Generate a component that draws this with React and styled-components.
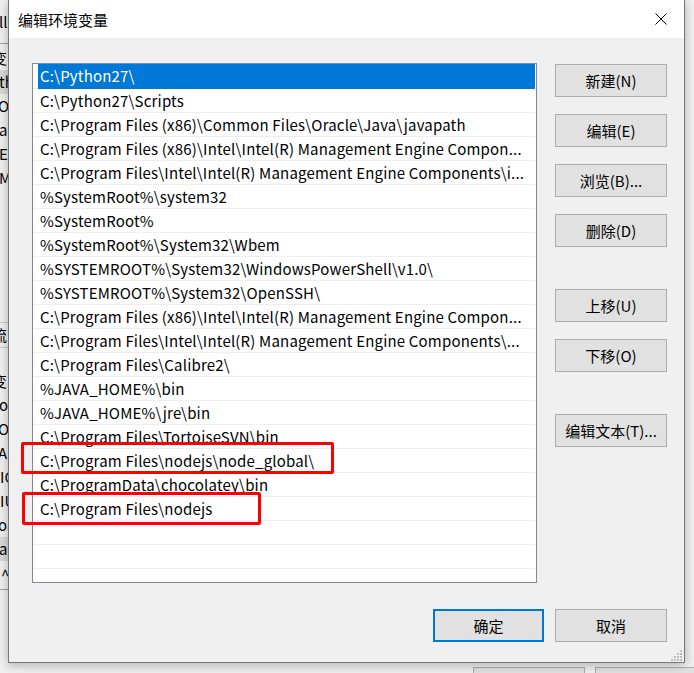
import styled, { createGlobalStyle } from "styled-components"

const GlobalStyle = createGlobalStyle`
  html, body {
    margin: 0;
    padding: 0;
    background: #f0f0f0;
  }
  body {
    font-family: "Noto Sans CJK SC", "Noto Sans", sans-serif;
  }
`;

const Desktop = styled.div`
  position: relative;
  width: 694px;
  height: 673px;
  overflow: hidden;
  background: #f0f0f0;
  display: grid;
  grid-template-columns: 8px 1fr 9px;
`;

// parent "environment variables" window peeking out behind the dialog
const LeftStrip = styled.div`
  display: flex;
  flex-direction: column;
  overflow: hidden;
  font-size: 15px;
  color: #000;
`;

const BackRow = styled.div`
  flex: none;
  height: ${(p) => p.$h}px;
  line-height: ${(p) => p.$h}px;
  background: ${(p) => (p.$sel ? "#d9d9d9" : "transparent")};
  text-indent: ${(p) => p.$indent || 0}px;
  white-space: nowrap;
`;

const BackLine = styled.div`
  flex: none;
  height: ${(p) => p.$h || 1}px;
  background: ${(p) => p.$color};
`;

const Middle = styled.div`
  display: flex;
  flex-direction: column;
  justify-content: flex-end;
`;

const BackButtons = styled.div`
  display: flex;
  gap: 10px;
  height: 6px;
  padding-left: 465px;
  overflow: hidden;
`;

const BackButton = styled.div`
  flex: none;
  width: 110px;
  height: 20px;
  border: 1px solid #adadad;
  background: #e1e1e1;
`;

const RightStrip = styled.div`
  display: flex;
  flex-direction: column;
  overflow: hidden;
`;

const Dialog = styled.div`
  position: absolute;
  left: 8px;
  top: -1px;
  width: 677px;
  height: 664px;
  box-sizing: border-box;
  border: 1px solid #767676;
  background: #f0f0f0;
  box-shadow: 0 2px 10px rgba(0, 0, 0, 0.28);
  display: flex;
  flex-direction: column;
`;

const TitleBar = styled.div`
  height: 38px;
  flex: none;
  background: #fff;
  display: flex;
  align-items: center;
  padding-left: 9px;
`;

const Title = styled.div`
  flex: 1;
  font-size: 15px;
  color: #000;
`;

const CloseButton = styled.div`
  width: 45px;
  height: 38px;
  display: flex;
  align-items: center;
  justify-content: center;
  margin-right: 1px;
`;

const Body = styled.div`
  flex: 1;
  display: flex;
  flex-direction: column;
  padding: 25px 17px 20px 23px;
`;

const Main = styled.div`
  display: grid;
  grid-template-columns: 505px 112px;
  gap: 18px;
`;

const PathList = styled.div`
  height: 520px;
  box-sizing: border-box;
  border: 1px solid #828790;
  background: #fff;
  padding: 1px 1px 0 0;
  overflow: hidden;
`;

const Row = styled.div`
  height: 24px;
  box-sizing: border-box;
  border-bottom: 1px solid #efefef;
  padding-left: 5px;
  display: flex;
`;

const Cell = styled.div`
  flex: 1;
  min-width: 0;
  padding-left: 2px;
  margin: ${(p) => (p.$selected ? "-1px 0 -1px 0" : "0")};
  background: ${(p) => (p.$selected ? "#0078d7" : "transparent")};
  color: ${(p) => (p.$selected ? "#fff" : "#000")};
  font-size: 15px;
  letter-spacing: 0.18px;
  line-height: 23px;
  white-space: nowrap;
  overflow: hidden;
  text-overflow: ellipsis;
`;

const SideButtons = styled.div`
  display: flex;
  flex-direction: column;
  gap: 17px;
  padding-top: 1px;
`;

const Button = styled.button`
  width: ${(p) => p.$w || 112}px;
  height: 33px;
  margin-top: ${(p) => p.$space || 0}px;
  box-sizing: border-box;
  border: ${(p) => (p.$primary ? "2px solid #0078d7" : "1px solid #adadad")};
  background: #e1e1e1;
  color: #000;
  font-family: "Noto Sans CJK SC", "Noto Sans", sans-serif;
  font-size: 15px;
  padding: 0;
  border-radius: 0;
  cursor: default;
`;

const Footer = styled.div`
  display: flex;
  justify-content: flex-end;
  gap: 11px;
  margin-top: 26px;
`;

const Grip = styled.svg`
  position: absolute;
  right: 1px;
  bottom: 1px;
`;

const Mark = styled.div`
  position: absolute;
  left: ${(p) => p.$x}px;
  top: ${(p) => p.$y}px;
  width: ${(p) => p.$w}px;
  height: ${(p) => p.$h}px;
  box-sizing: border-box;
  border: 3px solid #ff0000;
  border-radius: 2px;
`;

const paths = [
  "C:\\Python27\\",
  "C:\\Python27\\Scripts",
  "C:\\Program Files (x86)\\Common Files\\Oracle\\Java\\javapath",
  "C:\\Program Files (x86)\\Intel\\Intel(R) Management Engine Compon...",
  "C:\\Program Files\\Intel\\Intel(R) Management Engine Components\\i...",
  "%SystemRoot%\\system32",
  "%SystemRoot%",
  "%SystemRoot%\\System32\\Wbem",
  "%SYSTEMROOT%\\System32\\WindowsPowerShell\\v1.0\\",
  "%SYSTEMROOT%\\System32\\OpenSSH\\",
  "C:\\Program Files (x86)\\Intel\\Intel(R) Management Engine Compon...",
  "C:\\Program Files\\Intel\\Intel(R) Management Engine Components\\...",
  "C:\\Program Files\\Calibre2\\",
  "%JAVA_HOME%\\bin",
  "%JAVA_HOME%\\jre\\bin",
  "C:\\Program Files\\TortoiseSVN\\bin",
  "C:\\Program Files\\nodejs\\node_global\\",
  "C:\\ProgramData\\chocolatey\\bin",
  "C:\\Program Files\\nodejs",
  "",
  "",
  "",
];

const leftRows = [
  { h: 43, t: "ll", indent: -1 },
  { line: "#a0a0a0" },
  { h: 2 },
  { h: 24, t: "变", indent: -8 },
  { h: 24, t: "th", sel: true, indent: -1 },
  { h: 24, t: "Or", indent: -2 },
  { h: 24, t: "a", indent: -1 },
  { h: 24, t: "E", indent: -1 },
  { h: 24, t: "M", indent: -1 },
  { h: 132 },
  { line: "#c8c8c8" },
  { h: 24, t: "流", indent: -8 },
  { line: "#c8c8c8" },
  { h: 21 },
  { h: 24, t: "变", indent: -8 },
  { h: 24, t: "o", indent: -1 },
  { h: 24, t: "Or", indent: -2 },
  { h: 24, t: "A", indent: -2 },
  { h: 24, t: "IC", indent: 0 },
  { h: 24, t: "IU", indent: 0 },
  { h: 24, t: "oS", indent: -2 },
  { h: 24, t: "a", sel: true, indent: -1 },
  { h: 28, t: "^", indent: 1 },
  { line: "#a0a0a0" },
];

const rightStripes = [
  [43, "#f0f0f0"],
  [1, "#a0a0a0"],
  [207, "#e4e4e4"],
  [1, "#a0a0a0"],
  [18, "#e0e0e0"],
  [32, "#cdcdcd"],
  [20, "#e0e0e0"],
  [1, "#c8c8c8"],
  [21, "#e0e0e0"],
  [1, "#c8c8c8"],
  [21, "#e0e0e0"],
  [2, "#7a7a7a"],
  [45, "#ececec"],
  [57, "#c2c2c2"],
  [203, "#ececec"],
];

export default function App() {
  return (
    <>
      <GlobalStyle />
      <Desktop>
        <LeftStrip>
          {leftRows.map((r, i) =>
            r.line ? (
              <BackLine key={i} $color={r.line} />
            ) : (
              <BackRow key={i} $h={r.h} $sel={r.sel} $indent={r.indent}>
                {r.t}
              </BackRow>
            )
          )}
        </LeftStrip>
        <Middle>
          <BackButtons>
            <BackButton />
            <BackButton />
          </BackButtons>
        </Middle>
        <RightStrip>
          {rightStripes.map(([h, c], i) => (
            <BackLine key={i} $h={h} $color={c} />
          ))}
        </RightStrip>

        <Dialog>
          <TitleBar>
            <Title>编辑环境变量</Title>
            <CloseButton>
              <svg width="12" height="12" viewBox="0 0 12 12">
                <path d="M0.5 0.5 L11.5 11.5 M11.5 0.5 L0.5 11.5" stroke="#000" strokeWidth="1" fill="none" />
              </svg>
            </CloseButton>
          </TitleBar>
          <Body>
            <Main>
              <PathList>
                {paths.map((p, i) => (
                  <Row key={i}>
                    <Cell $selected={i === 0}>{p}</Cell>
                  </Row>
                ))}
              </PathList>
              <SideButtons>
                <Button>新建(N)</Button>
                <Button>编辑(E)</Button>
                <Button>浏览(B)...</Button>
                <Button>删除(D)</Button>
                <Button $space={25}>上移(U)</Button>
                <Button>下移(O)</Button>
                <Button $space={25}>编辑文本(T)...</Button>
              </SideButtons>
            </Main>
            <Footer>
              <Button $primary $w={111}>确定</Button>
              <Button>取消</Button>
            </Footer>
          </Body>
          <Grip width="12" height="12" viewBox="0 0 12 12">
            <g fill="#bdbdbd">
              <rect x="9" y="1" width="2" height="2" />
              <rect x="6" y="4" width="2" height="2" />
              <rect x="9" y="4" width="2" height="2" />
              <rect x="3" y="7" width="2" height="2" />
              <rect x="6" y="7" width="2" height="2" />
              <rect x="9" y="7" width="2" height="2" />
              <rect x="0" y="10" width="2" height="2" />
              <rect x="3" y="10" width="2" height="2" />
              <rect x="6" y="10" width="2" height="2" />
              <rect x="9" y="10" width="2" height="2" />
            </g>
          </Grip>
        </Dialog>

        <Mark $x={21} $y={442} $w={313} $h={32} />
        <Mark $x={22} $y={492} $w={239} $h={33} />
      </Desktop>
    </>
  )
}
